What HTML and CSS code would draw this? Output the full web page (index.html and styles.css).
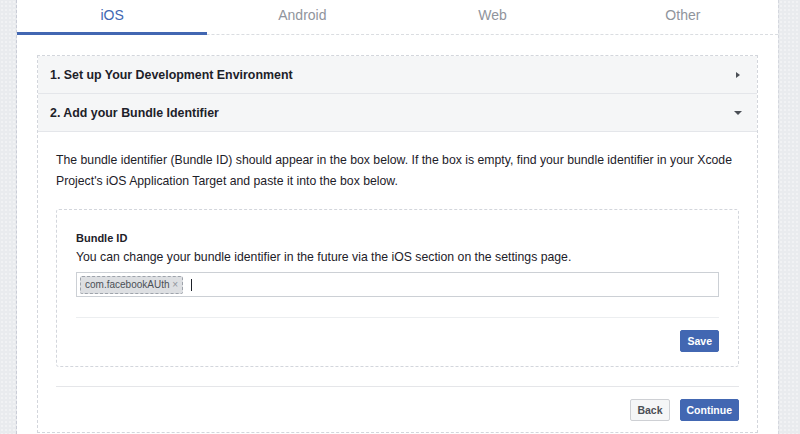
FILE: index.html
```html
<!DOCTYPE html>
<html>
<head>
<meta charset="utf-8">
<link rel="stylesheet" href="styles.css">
</head>
<body>
<div class="side side-left"></div>
<main class="panel">
  <nav class="tabs">
    <div class="tab active">iOS</div>
    <div class="tab">Android</div>
    <div class="tab">Web</div>
    <div class="tab">Other</div>
  </nav>
  <section class="content">
    <div class="accordion">
      <div class="acc-head">
        <span>1. Set up Your Development Environment</span>
        <span class="tri tri-right"></span>
      </div>
      <div class="acc-head">
        <span>2. Add your Bundle Identifier</span>
        <span class="tri tri-down"></span>
      </div>
      <div class="acc-body">
        <p class="intro">The bundle identifier (Bundle ID) should appear in the box below. If the box is empty, find your bundle identifier in your Xcode Project's iOS Application Target and paste it into the box below.</p>
        <div class="card">
          <div class="label">Bundle ID</div>
          <div class="desc">You can change your bundle identifier in the future via the iOS section on the settings page.</div>
          <div class="input">
            <span class="tag">com.facebookAUth <span class="x">×</span></span>
            <span class="caret"></span>
          </div>
          <div class="card-foot">
            <button class="btn primary">Save</button>
          </div>
        </div>
        <div class="foot">
          <button class="btn">Back</button>
          <button class="btn primary">Continue</button>
        </div>
      </div>
    </div>
  </section>
</main>
<div class="side side-right"></div>
</body>
</html>
```

FILE: styles.css
```css
html, body {
  margin: 0;
  padding: 0;
  height: 434px;
  overflow: hidden;
}
body {
  display: flex;
  background: #e9ebee;
  font-family: "Liberation Sans", Arial, sans-serif;
  color: #1d2129;
}
.side {
  background-color: #e9ebee;
  background-image: radial-gradient(#f1f2f4 0.8px, transparent 1px);
  background-size: 4px 4px;
}
.side-left {
  width: 16px;
  border-right: 1px dashed #c9ccd6;
}
.side-right {
  flex: 1;
  border-left: 1px dashed #d4d7de;
}
.panel {
  width: 761px;
  background: #fff;
}
.tabs {
  display: flex;
  height: 35px;
  border-bottom: 1px dashed #dadde1;
  box-sizing: border-box;
}
.tab {
  flex: 1;
  text-align: center;
  font-size: 14px;
  line-height: 31px;
  color: #90949c;
}
.tab.active {
  color: #4267b2;
  border-bottom: 3px solid #4267b2;
  margin-bottom: -1px;
}
.content {
  padding: 20px 20px 0;
}
.accordion {
  border: 1px dashed #d3d6dc;
  height: 378px;
  box-sizing: border-box;
}
.acc-head {
  height: 38px;
  background: #f5f6f7;
  border-bottom: 1px solid #e4e6ea;
  box-sizing: border-box;
  display: flex;
  align-items: center;
  justify-content: space-between;
  padding: 0 17px 0 12px;
  font-weight: bold;
  font-size: 12.4px;
  color: #1d2129;
}
.tri {
  width: 0;
  height: 0;
  border-style: solid;
}
.tri-right {
  border-width: 3.5px 0 3.5px 4px;
  border-color: transparent transparent transparent #4b4f56;
}
.tri-down {
  border-width: 4px 4px 0 4px;
  border-color: #4b4f56 transparent transparent transparent;
  margin-right: -2px;
}
.acc-body {
  padding: 18px 18px 0;
}
.intro {
  margin: 0 0 17px;
  font-size: 12.25px;
  line-height: 21px;
  color: #1d2129;
}
.card {
  border: 1px dashed #d3d6dc;
  border-radius: 3px;
  padding: 20px 19px 14px;
}
.label {
  font-size: 11px;
  font-weight: bold;
  line-height: 16px;
  color: #1d2129;
}
.desc {
  font-size: 12.25px;
  line-height: 21px;
  margin-top: 1px;
  color: #1d2129;
}
.input {
  margin-top: 4px;
  height: 25px;
  border: 1px solid #ccd0d5;
  box-sizing: border-box;
  display: flex;
  align-items: center;
  padding: 0 3px;
}
.tag {
  background: #dddfe2;
  border: 1px dashed #9ea3ab;
  border-radius: 2px;
  font-size: 10px;
  line-height: 16px;
  padding: 0 4px 0 4px;
  color: #4b4f56;
}
.tag .x {
  color: #90949c;
  font-size: 10px;
}
.caret {
  width: 1px;
  height: 12px;
  background: #1d2129;
  margin-left: 8px;
}
.card-foot {
  margin-top: 20px;
  border-top: 1px solid #eceef0;
  padding-top: 12px;
  display: flex;
  justify-content: flex-end;
}
.btn {
  font-family: "Liberation Sans", Arial, sans-serif;
  font-size: 10.5px;
  font-weight: bold;
  height: 22px;
  padding: 0 6px;
  border-radius: 2px;
  border: 1px solid #ced0d4;
  background: #f5f6f7;
  color: #4b4f56;
  box-sizing: border-box;
}
.btn.primary {
  background: #4267b2;
  border-color: #4267b2;
  color: #fff;
}
.foot {
  margin-top: 19px;
  border-top: 1px solid #e5e6e9;
  padding-top: 12px;
  display: flex;
  justify-content: flex-end;
  gap: 10px;
}
```
